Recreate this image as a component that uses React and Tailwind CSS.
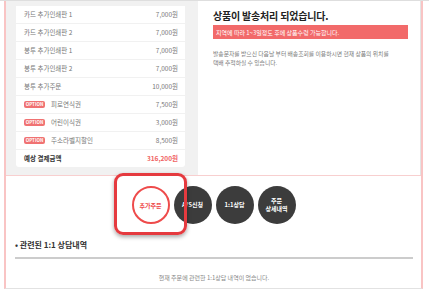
const rows = [
  { label: '카드 추가인쇄판 1', price: '7,000원' },
  { label: '카드 추가인쇄판 2', price: '7,000원' },
  { label: '봉투 추가인쇄판 1', price: '7,000원' },
  { label: '봉투 추가인쇄판 2', price: '7,000원' },
  { label: '봉투 추가주문', price: '10,000원' },
  { label: '피로연식권', price: '7,500원', option: true },
  { label: '어린이식권', price: '3,000원', option: true },
  { label: '주소라벨지할인', price: '8,500원', option: true },
];

function Row({ label, price, option }) {
  return (
    <div className="flex h-[17px] items-center justify-between bg-white pl-[8px] pr-[7px] text-[6.5px] text-[#777]">
      <div className="flex items-center gap-[6px]">
        {option && (
          <span className="flex h-[7px] w-[21px] items-center justify-center rounded-[2px] bg-[#f07272] text-[4.5px] font-bold leading-none text-white">
            OPTION
          </span>
        )}
        <span>{label}</span>
      </div>
      <span>{price}</span>
    </div>
  );
}

function Circle({ children, active }) {
  if (active) {
    return (
      <div className="flex h-[38px] w-[38px] items-center justify-center rounded-full border-2 border-[#ee4b4b] bg-white text-[6px] font-bold text-[#ee4b4b]">
        {children}
      </div>
    );
  }
  return (
    <div className="flex h-[38px] w-[38px] flex-col items-center justify-center rounded-full bg-[#3c3c3c] text-center text-[6px] font-bold leading-[8px] text-white">
      {children}
    </div>
  );
}

export default function App() {
  return (
    <div className="relative h-[290px] w-[429px] overflow-hidden border-t border-[#dedede] bg-white font-['Noto_Sans_CJK_KR',sans-serif]">
      <div className="ml-[4px] flex h-[288px] w-[419px] flex-col border-x-2 border-b border-x-[#f9c4c4] border-b-[#e2e2e2]">
        {/* top: order summary + shipping notice */}
        <div className="flex h-[175px] border-b border-[#f8cfcf]">
          <div className="w-[192px] bg-[#f1f1f1] pl-[10px] pr-[13px] pt-[5px]">
            <div className="flex flex-col gap-[1px]">
              {rows.map((r) => (
                <Row key={r.label} {...r} />
              ))}
              <div className="flex h-[17px] items-center justify-between rounded-b-[3px] bg-white pl-[8px] pr-[7px] text-[6.5px] font-bold">
                <span className="text-[#333]">예상 결제금액</span>
                <span className="text-[#f06262]">316,200원</span>
              </div>
            </div>
          </div>
          <div className="flex-1 border-r border-[#e4e4e4] bg-white pl-[15px] pr-[12px] pt-[6px]">
            <h2 className="text-[10px] font-bold leading-[18px] tracking-[-0.2px] text-[#222]">
              상품이 발송처리 되었습니다.
            </h2>
            <div className="flex h-[14px] items-center bg-[#f26a6a] pl-[3px] text-[6px] text-white">
              지역에 따라 1~3일정도 후에 상품수령 가능합니다.
            </div>
            <p className="mt-[10px] text-[5.8px] leading-[9px] text-[#7a7a7a]">
              발송문자를 받으신 다음날 부터 배송조회를 이용하시면 현재 상품의 위치를
              <br />
              택배 추적하실 수 있습니다.
            </p>
          </div>
        </div>

        {/* action buttons */}
        <div className="flex justify-center gap-[4px] pt-[10px]">
          <Circle active>추가주문</Circle>
          <Circle>A/S신청</Circle>
          <Circle>1:1상담</Circle>
          <Circle>
            <span>주문</span>
            <span>상세내역</span>
          </Circle>
        </div>

        {/* related consultations */}
        <div className="mt-[14px] pl-[9px] pr-[8px]">
          <div className="text-[8px] font-bold leading-[14px] text-[#333]">• 관련된 1:1 상담내역</div>
          <div className="mt-[5px] h-[2px] bg-[#cccccc]" />
          <div className="pt-[14px] text-center text-[6px] text-[#888]">
            현재 주문에 관련한 1:1상담 내역이 없습니다.
          </div>
        </div>
      </div>

      {/* highlight annotation */}
      <div className="absolute left-[114px] top-[172px] h-[62px] w-[73px] rounded-[9px] border-[3px] border-[#e53a3f] shadow-[0_2px_4px_rgba(0,0,0,0.35)]" />
    </div>
  );
}
